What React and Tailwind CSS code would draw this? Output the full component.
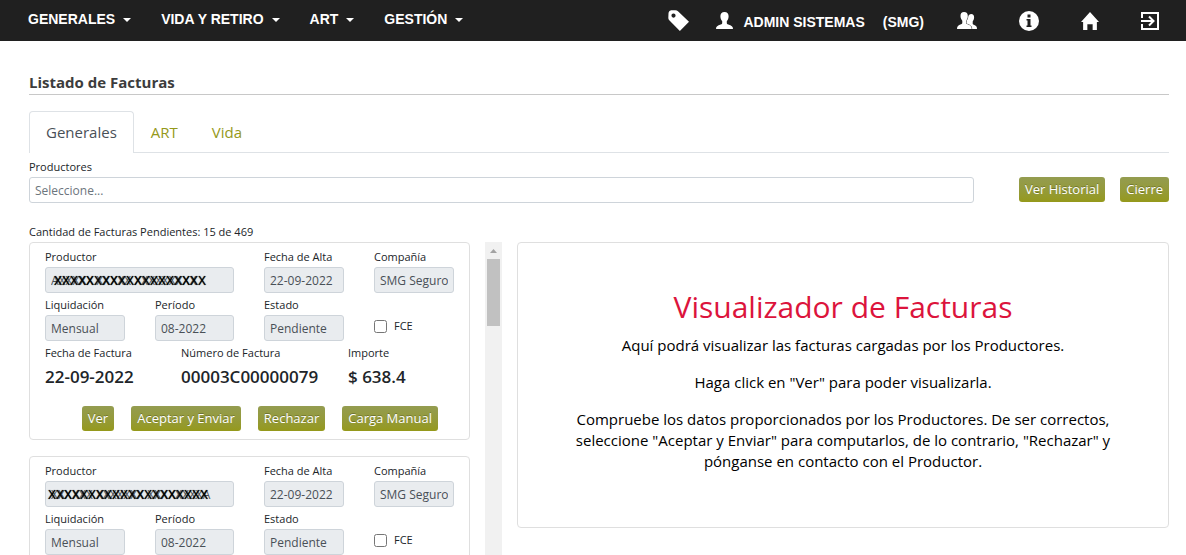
import React from "react";

const NAV = ["GENERALES", "VIDA Y RETIRO", "ART", "GESTIÓN"];

const INVOICES = [
  {
    id: 1,
    name: "AXXXXX XXXXX XXXXXXXXX",
    mask: "XXXXXXXXXXXXXXXXXXX",
    maskClass: "left-[9px]",
    liquidacion: "Mensual",
    periodo: "08-2022",
    alta: "22-09-2022",
    estado: "Pendiente",
    compania: "SMG Seguros",
    fecha: "22-09-2022",
    numero: "00003C00000079",
    importe: "$ 638.4",
  },
  {
    id: 2,
    name: "XXXXXX XXXXXXX XXXXXXXXA",
    mask: "XXXXXXXXXXXXXXXXXXXX",
    maskClass: "left-[3px]",
    liquidacion: "Mensual",
    periodo: "08-2022",
    alta: "22-09-2022",
    estado: "Pendiente",
    compania: "SMG Seguros",
    fecha: "22-09-2022",
    numero: "",
    importe: "",
  },
];

function Btn({ children }) {
  return (
    <button
      type="button"
      className="h-[25px] whitespace-nowrap rounded-[3px] bg-linear-to-b from-[#949c50] to-[#95991a] px-[6px] text-[13px] leading-[25px] text-white text-shadow-[0_-1px_0_rgba(0,0,0,0.25)]"
    >
      {children}
    </button>
  );
}

function Field({ id, label, value, className = "" }) {
  return (
    <div className={"flex min-w-0 flex-col " + className}>
      <label htmlFor={id} className="h-[22px] whitespace-nowrap pt-[2px] leading-[20px]">
        {label}
      </label>
      <input
        id={id}
        readOnly
        defaultValue={value}
        className="h-[26px] w-full rounded-[3px] border border-[#ced4da] bg-[#e9ecef] px-[5px] text-[12px] text-[#495057]"
      />
    </div>
  );
}

function Figure({ label, value }) {
  return (
    <div className="whitespace-nowrap">
      <div className="h-[22px] pt-[2px] leading-[20px]">{label}</div>
      <div className="h-[28px] text-[17px] font-semibold leading-[28px]">{value}</div>
    </div>
  );
}

function Invoice({ data }) {
  const p = "factura-" + data.id + "-";
  return (
    <article className="shrink-0 rounded-[4px] border border-[#dfdfdf] px-[15px] pb-[8px] pt-[2px]">
      <div className="grid grid-cols-[80fr_79fr_80fr_80fr] gap-x-[30px]">
        <div className="relative col-span-2">
          <Field id={p + "productor"} label="Productor" value={data.name} />
          <span
            aria-hidden="true"
            className={
              "absolute bottom-0 whitespace-nowrap font-['Liberation_Sans',Arial,sans-serif] text-[12px] leading-[24px] text-black text-shadow-[0_0_1px_#000] " +
              data.maskClass
            }
          >
            {data.mask}
          </span>
        </div>
        <Field id={p + "alta"} label="Fecha de Alta" value={data.alta} />
        <Field id={p + "compania"} label="Compañía" value={data.compania} />
        <Field id={p + "liquidacion"} label="Liquidación" value={data.liquidacion} />
        <Field id={p + "periodo"} label="Período" value={data.periodo} />
        <Field id={p + "estado"} label="Estado" value={data.estado} />
        <label className="flex h-[48px] items-center gap-[7px] pt-[18px]">
          <input type="checkbox" className="size-[13px]" />
          FCE
        </label>
      </div>
      <div className="grid grid-cols-[136fr_167fr_106fr]">
        <Figure label="Fecha de Factura" value={data.fecha} />
        <Figure label="Número de Factura" value={data.numero} />
        <Figure label="Importe" value={data.importe} />
      </div>
      <div className="flex justify-end gap-[17px] pr-[16px] pt-[15px]">
        <Btn>Ver</Btn>
        <Btn>Aceptar y Enviar</Btn>
        <Btn>Rechazar</Btn>
        <Btn>Carga Manual</Btn>
      </div>
    </article>
  );
}

function TopBar() {
  return (
    <header className="flex h-[41px] shrink-0 items-center justify-between bg-[#202020] pl-[28px] pr-[27px] font-['Liberation_Sans',Arial,sans-serif] text-[14px] font-bold text-white">
      <nav className="flex items-center gap-[30px] pb-[2px]">
        {NAV.map((n) => (
          <button key={n} type="button" className="flex items-center gap-[8px] whitespace-nowrap">
            {n}
            <svg viewBox="0 0 8 4" className="h-[4px] w-[8px]" fill="currentColor" aria-hidden="true">
              <path d="M0 0h8L4 4z" />
            </svg>
          </button>
        ))}
      </nav>
      <div className="flex items-center gap-[42px]">
        <div className="flex items-center gap-[33px]">
          <div className="flex items-center gap-[27px]">
            <a href="#etiquetas" aria-label="Etiquetas">
              <svg viewBox="0 0 20 20" className="size-[21px]" fill="currentColor" aria-hidden="true">
                <path
                  fillRule="evenodd"
                  d="M0.500 2.500 Q1 .7 3 .3 L7 .2 Q8.500 .2 9.500 1.200 L20 11.300 11.300 20 1.200 9.800 Q.3 8.800 .3 7.500ZM5.200 3.300a2 2 0 1 0 .1 4 2 2 0 0 0-.1-4Z"
                />
              </svg>
            </a>
            <a href="#usuario" className="flex items-center gap-[10px] whitespace-nowrap">
              <svg viewBox="0 0 17 17" className="size-[17px]" fill="currentColor" aria-hidden="true">
                <path d="M8.500 0c2.700 0 4.300 1.700 4.100 4.600-.1 2-.8 3.500-1.800 4.600v1.700c0 .8.400 1.200 1.500 1.600 3.200 1.100 4.700 1.800 4.700 4.500H0c0-2.700 1.500-3.400 4.700-4.500 1.100-.4 1.500-.8 1.500-1.600V9.200C5.200 8.100 4.500 6.600 4.400 4.600 4.200 1.700 5.800 0 8.500 0Z" />
              </svg>
              <span className="pt-[3px]">ADMIN SISTEMAS</span>
              <span className="pl-[8px] pt-[3px]">(SMG)</span>
            </a>
          </div>
          <a href="#usuarios" aria-label="Usuarios">
            <svg viewBox="0 0 20 17" className="h-[17px] w-[20px]" fill="currentColor" aria-hidden="true">
              <path d="M14.200 2c2 0 3 1.400 2.900 3.600-.1 1.700-.6 2.900-1.400 3.900v2c0 .7.300 1 1.100 1.300 2.300.9 3.200 1.500 3.200 4.200H9V8c1-1 1.800-2 2-3.500C11.600 3 12.700 2 14.200 2Z" />
              <path
                stroke="#202020"
                strokeWidth="1"
                paintOrder="stroke"
                d="M7 0c2.500 0 4 1.600 3.800 4.200-.1 2-.8 3.400-1.700 4.500v2c0 .8.400 1.200 1.300 1.600 2.800 1.100 4.300 1.800 4.300 4.700H0c0-2.900 1.200-3.600 4-4.700.9-.4 1.300-.8 1.300-1.600v-2C4.400 7.600 3.600 6.200 3.500 4.200 3.300 1.600 4.700 0 7 0Z"
              />
            </svg>
          </a>
        </div>
        <a href="#informacion" aria-label="Información">
          <svg viewBox="0 0 20 20" className="size-[20px]" aria-hidden="true">
            <circle cx="10" cy="10" r="10" fill="#fff" />
            <path d="M8.500 3.500h3v3h-3zM7.500 8h4v6.500h1V16h-5v-1.500h1v-5h-1z" fill="#202020" />
          </svg>
        </a>
        <a href="#inicio" aria-label="Inicio">
          <svg viewBox="0 0 17 17" className="size-[18px]" fill="currentColor" aria-hidden="true">
            <path d="M8.500 0 17 9.500h-2V17h-4v-5.500H6V17H2V9.500H0z" />
          </svg>
        </a>
        <a href="#salir" aria-label="Salir">
          <svg viewBox="0 0 18 18" className="size-[18px]" fill="none" stroke="currentColor" strokeWidth="2" aria-hidden="true">
            <path d="M1 6V1h16v16H1v-5" />
            <path d="M0 9h12M8 4.500 12.500 9 8 13.500" />
          </svg>
        </a>
      </div>
    </header>
  );
}

const TABS = ["Generales", "ART", "Vida"];

export default function App() {
  return (
    <div className="flex h-screen flex-col overflow-hidden bg-white font-['Open_Sans','Noto_Sans',sans-serif] text-[11px] text-[#212529]">
      <TopBar />
      <main className="flex min-h-0 flex-1 flex-col pl-[29px] pr-[17px] pt-[30px]">
        <h1 className="border-b border-[#c8c8c8] pb-[1px] text-[15px] font-bold leading-[22px] text-[#3c3c3c]">
          Listado de Facturas
        </h1>
        <div role="tablist" className="mt-[16px] flex h-[42px] shrink-0 border-b border-[#dee2e6] text-[15px]">
          {TABS.map((t, i) => (
            <button
              key={t}
              type="button"
              role="tab"
              aria-selected={i === 0}
              className={
                i === 0
                  ? "-mb-px rounded-t-[4px] border border-b-0 border-[#dee2e6] bg-white px-[16px] text-[#495057]"
                  : "px-[17px] pt-[2px] text-[#95991a]"
              }
            >
              {t}
            </button>
          ))}
        </div>

        <div className="mt-[4px] flex items-end">
          <div className="flex min-w-0 flex-1 flex-col">
            <label htmlFor="productores" className="h-[20px] leading-[20px]">
              Productores
            </label>
            <input
              id="productores"
              placeholder="Seleccione..."
              className="h-[26px] w-full rounded-[3px] border border-[#ced4da] px-[5px] text-[12px] placeholder:text-[#6c757d]"
            />
          </div>
          <div className="ml-[45px] flex gap-[15px] pb-px">
            <Btn>Ver Historial</Btn>
            <Btn>Cierre</Btn>
          </div>
        </div>

        <p className="mt-[19px] h-[20px] shrink-0 leading-[20px]">Cantidad de Facturas Pendientes: 15 de 469</p>

        <div className="grid min-h-0 flex-1 grid-cols-[473fr_652fr] gap-[15px]">
          <div className="flex min-h-0">
            <div className="flex min-w-0 flex-1 flex-col gap-[16px] overflow-y-auto pr-[15px] [scrollbar-width:none]">
              {INVOICES.map((d) => (
                <Invoice key={d.id} data={d} />
              ))}
            </div>
            <div aria-hidden="true" className="flex w-[17px] shrink-0 flex-col items-center bg-[#f1f1f1]">
              <svg viewBox="0 0 17 17" className="size-[17px]" fill="#a3a3a3">
                <path d="M5 11h7L8.500 7z" />
              </svg>
              <div className="h-[67px] w-[13px] bg-[#c1c1c1]" />
            </div>
          </div>
          <section className="self-start rounded-[4px] border border-[#dfdfdf] px-[50px] pb-[55px] pt-[46px] text-center text-[15px] leading-[21px] text-black">
            <h2 className="mb-[10px] text-[30px] leading-[36px] text-[#dc143c]">Visualizador de Facturas</h2>
            <p className="mb-[16px]">Aquí podrá visualizar las facturas cargadas por los Productores.</p>
            <p className="mb-[16px]">Haga click en "Ver" para poder visualizarla.</p>
            <p>
              Compruebe los datos proporcionados por los Productores. De ser correctos, seleccione "Aceptar y Enviar"
              para computarlos, de lo contrario, "Rechazar" y pónganse en contacto con el Productor.
            </p>
          </section>
        </div>
      </main>
    </div>
  );
}
